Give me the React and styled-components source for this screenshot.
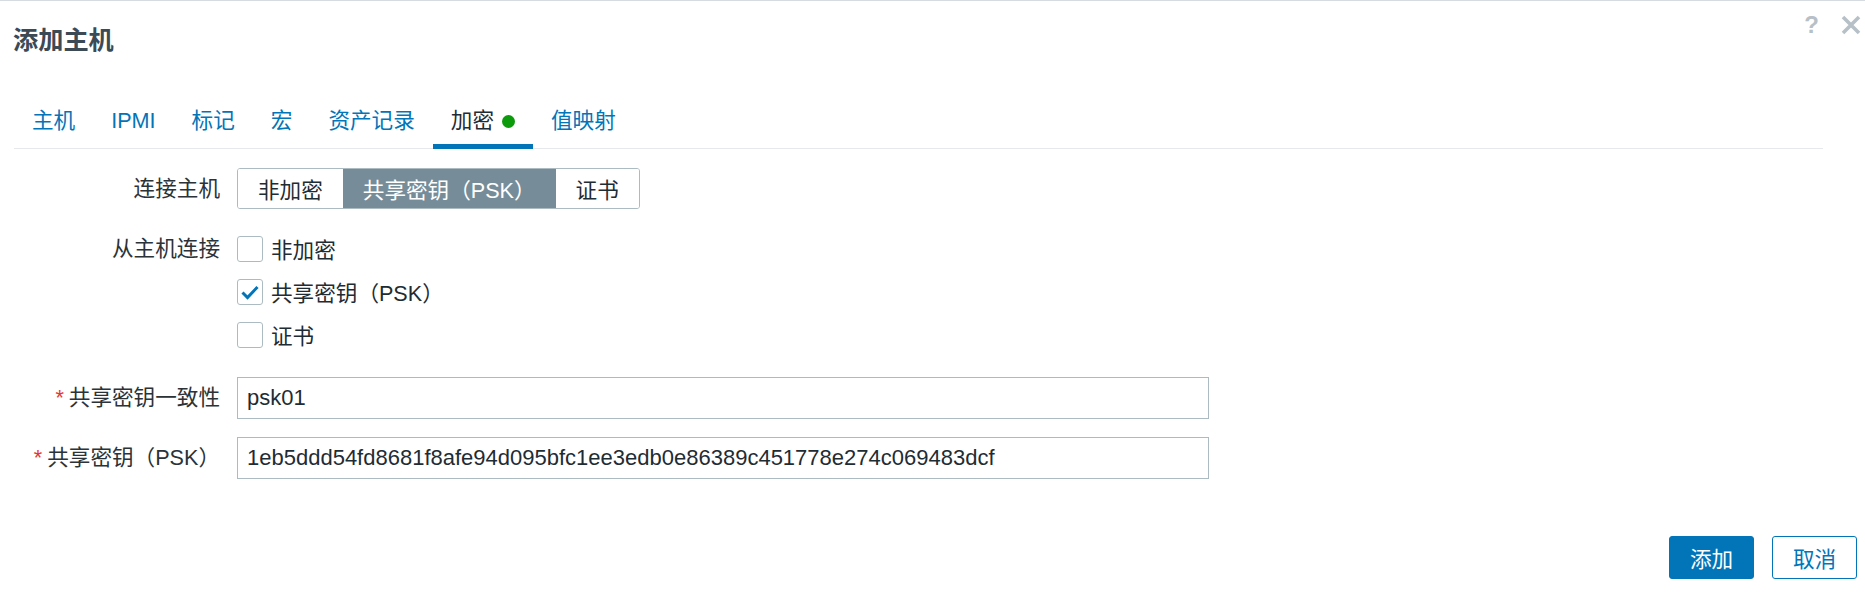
import React from 'react';
import styled, { createGlobalStyle } from 'styled-components';

const GlobalStyle = createGlobalStyle`
  html, body {
    margin: 0;
    padding: 0;
    background: #ffffff;
  }
  body {
    font-family: "Liberation Sans", Arial, "Noto Sans CJK SC", sans-serif;
    font-size: 21.6px;
    color: #1f2c33;
  }
  * {
    box-sizing: border-box;
  }
`;

const Dialog = styled.div`
  width: 1865px;
  height: 597px;
  border-top: 1px solid #d5dbe0;
  padding: 0 8px 0 14px;
  display: flex;
  flex-direction: column;
`;

const Header = styled.div`
  height: 107px;
  display: flex;
  justify-content: space-between;
  align-items: flex-start;
`;

const Title = styled.h1`
  margin: 24px 0 0 -1px;
  font-size: 25.2px;
  line-height: 30px;
  font-weight: bold;
  color: #3b4a55;
`;

const HeaderTools = styled.div`
  display: flex;
  align-items: center;
  gap: 22px;
  margin-top: 11px;
  margin-right: -4px;
`;

const HelpIcon = styled.span`
  font-size: 24px;
  line-height: 26px;
  font-weight: bold;
  color: #b7c0c7;
`;

const CloseIcon = styled.svg`
  width: 20px;
  height: 20px;
  display: block;
`;

const TabList = styled.div`
  display: flex;
  margin-right: 34px;
  border-bottom: 1px solid #e5e9ec;
`;

const Tab = styled.div`
  position: relative;
  display: flex;
  align-items: center;
  padding: 0 18px 14px;
  line-height: 26px;
  color: ${({ $active }) => ($active ? '#1f2c33' : '#0275b8')};

  &::after {
    content: '';
    display: ${({ $active }) => ($active ? 'block' : 'none')};
    position: absolute;
    left: 0;
    right: 0;
    bottom: -1px;
    height: 5px;
    background: #0275b8;
  }
`;

const StatusDot = styled.span`
  width: 13px;
  height: 13px;
  margin-left: 8px;
  border-radius: 50%;
  background: #0b9b0b;
`;

const Form = styled.div`
  margin-top: 19px;
  display: grid;
  grid-template-columns: 206px 972px;
  column-gap: 17px;
  row-gap: 18px;
  align-items: start;
`;

const Label = styled.div`
  text-align: right;
  line-height: ${({ $h }) => $h}px;
  white-space: nowrap;
  color: #2b3338;
`;

const Required = styled.span`
  color: #e33734;
  margin-right: 5px;
`;

const Segmented = styled.div`
  display: inline-flex;
  justify-self: start;
  height: 41px;
  border: 1px solid #acbbc2;
  border-radius: 3px;
  overflow: hidden;
`;

const Segment = styled.div`
  display: flex;
  align-items: center;
  padding: 0 20px;
  white-space: nowrap;
  background: ${({ $active }) => ($active ? '#768d99' : '#ffffff')};
  color: ${({ $active }) => ($active ? '#ffffff' : '#1f2c33')};
`;

const CheckList = styled.div`
  display: flex;
  flex-direction: column;
  padding-bottom: 3px;
`;

const CheckItem = styled.label`
  height: 43px;
  display: flex;
  align-items: center;
  gap: 8px;
  white-space: nowrap;
`;

const Box = styled.span`
  width: 26px;
  height: 26px;
  border: 1px solid #acbbc2;
  border-radius: 3px;
  display: flex;
  align-items: center;
  justify-content: center;
  background: #ffffff;
`;

const TextInput = styled.div`
  height: 42px;
  border: 1px solid #acbbc2;
  padding: 0 9px;
  display: flex;
  align-items: center;
  white-space: nowrap;
  font-size: 22px;
  color: #1f2c33;
`;

const Footer = styled.div`
  margin-top: 57px;
  display: flex;
  justify-content: flex-end;
  gap: 18px;
`;

const Button = styled.button`
  height: 43px;
  width: 85px;
  border-radius: 3px;
  font-family: inherit;
  font-size: 21.6px;
  padding: 0;
  border: 1px solid #0275b8;
  background: ${({ $primary }) => ($primary ? '#0275b8' : '#ffffff')};
  color: ${({ $primary }) => ($primary ? '#ffffff' : '#0275b8')};
`;

const tabs = ['主机', 'IPMI', '标记', '宏', '资产记录', '加密', '值映射'];

const Check = ({ checked }) => (
  <Box>
    {checked && (
      <svg width="20" height="20" viewBox="0 0 20 20">
        <polyline points="2.5,10.5 7.5,15.5 17.5,5" fill="none" stroke="#0275b8" strokeWidth="3" />
      </svg>
    )}
  </Box>
);

export default function App() {
  return (
    <>
      <GlobalStyle />
      <Dialog>
        <Header>
          <Title>添加主机</Title>
          <HeaderTools>
            <HelpIcon>?</HelpIcon>
            <CloseIcon viewBox="0 0 20 20">
              <path d="M2 2 L18 18 M18 2 L2 18" stroke="#b7c0c7" strokeWidth="3.6" />
            </CloseIcon>
          </HeaderTools>
        </Header>

        <TabList>
          {tabs.map((t) => (
            <Tab key={t} $active={t === '加密'}>
              {t}
              {t === '加密' && <StatusDot />}
            </Tab>
          ))}
        </TabList>

        <Form>
          <Label $h={41}>连接主机</Label>
          <Segmented>
            <Segment>非加密</Segment>
            <Segment $active>共享密钥（PSK）</Segment>
            <Segment>证书</Segment>
          </Segmented>

          <Label $h={43}>从主机连接</Label>
          <CheckList>
            <CheckItem>
              <Check />
              非加密
            </CheckItem>
            <CheckItem>
              <Check checked />
              共享密钥（PSK）
            </CheckItem>
            <CheckItem>
              <Check />
              证书
            </CheckItem>
          </CheckList>

          <Label $h={42}>
            <Required>*</Required>共享密钥一致性
          </Label>
          <TextInput>psk01</TextInput>

          <Label $h={42}>
            <Required>*</Required>共享密钥（PSK）
          </Label>
          <TextInput>1eb5ddd54fd8681f8afe94d095bfc1ee3edb0e86389c451778e274c069483dcf</TextInput>
        </Form>

        <Footer>
          <Button $primary>添加</Button>
          <Button>取消</Button>
        </Footer>
      </Dialog>
    </>
  );
}
